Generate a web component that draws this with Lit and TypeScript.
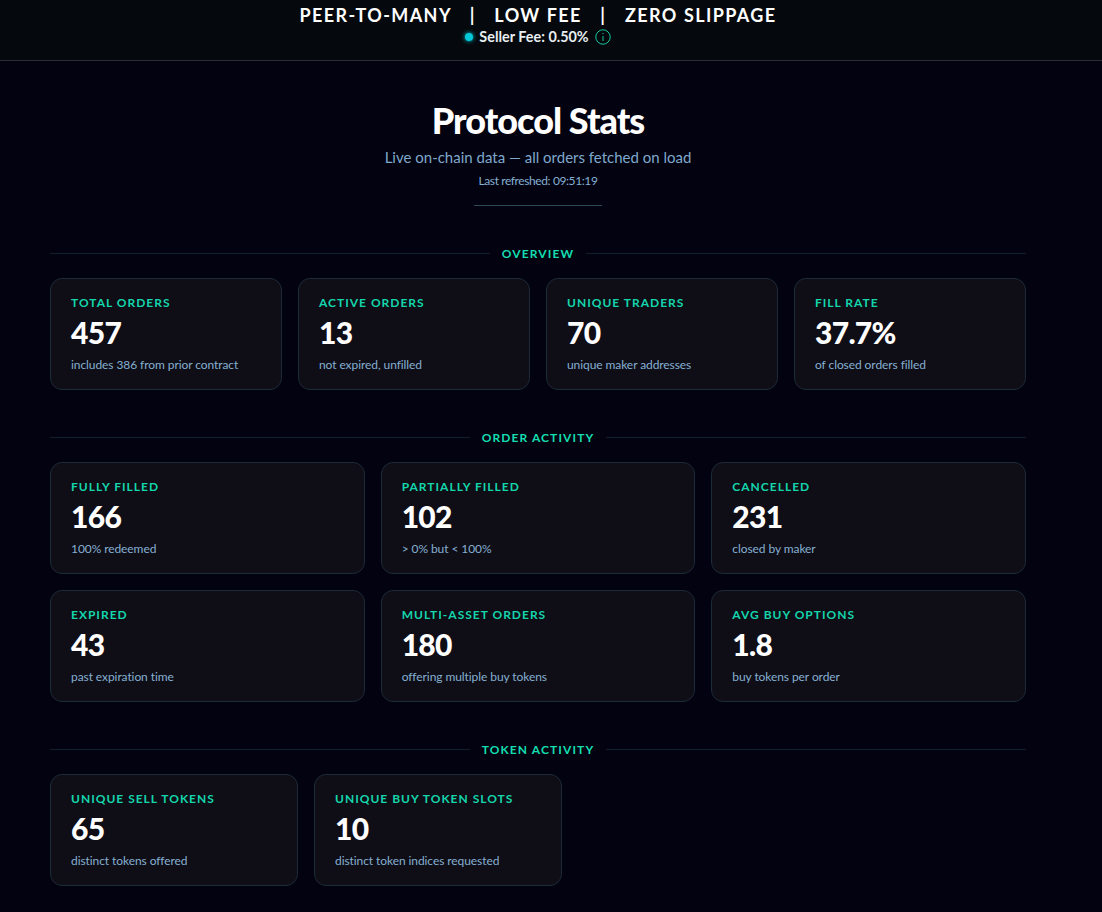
import { LitElement, html, css } from "lit";
import { customElement } from "lit/decorators.js";

type Stat = [string, string, string];
const overview: Stat[] = [
  ["Total Orders", "457", "includes 386 from prior contract"],
  ["Active Orders", "13", "not expired, unfilled"],
  ["Unique Traders", "70", "unique maker addresses"],
  ["Fill Rate", "37.7%", "of closed orders filled"],
];
const activity: Stat[] = [
  ["Fully Filled", "166", "100% redeemed"],
  ["Partially Filled", "102", "> 0% but < 100%"],
  ["Cancelled", "231", "closed by maker"],
  ["Expired", "43", "past expiration time"],
  ["Multi-Asset Orders", "180", "offering multiple buy tokens"],
  ["Avg Buy Options", "1.8", "buy tokens per order"],
];
const tokens: Stat[] = [
  ["Unique Sell Tokens", "65", "distinct tokens offered"],
  ["Unique Buy Token Slots", "10", "distinct token indices requested"],
];

@customElement("app-root")
export class AppRoot extends LitElement {
  static styles = css`
    :host { display: block; min-height: 912px; background: #020210; color: #fff; font-family: Lato, "Noto Sans", sans-serif; overflow: hidden; }
    .top { height: 61px; box-sizing: border-box; border-bottom: 1px solid #2a2d35; background: #05090d; display: flex; flex-direction: column; align-items: center; padding: 5px 26px 0 0; }
    .tag { font-size: 18px; line-height: 20px; font-weight: 700; letter-spacing: 1.4px; word-spacing: 0.4px; white-space: pre; }
    .fee { display: flex; align-items: center; gap: 6px; font-size: 14.4px; font-weight: 700; line-height: 20px; margin-top: 2px; color: #e8eef2; }
    .dot { width: 8px; height: 8px; border-radius: 50%; background: #00c8d8; box-shadow: 0 0 4px #00c8d8; }
    .main { width: 976px; margin-left: 50px; }
    .head { display: flex; flex-direction: column; align-items: center; padding-top: 37px; }
    h1 { margin: 0; font-size: 36px; line-height: 44px; font-weight: 900; letter-spacing: -0.95px; }
    .sub { font-size: 15px; line-height: 20px; color: #7fa9cc; margin-top: 5px; }
    .ref { font-size: 12px; line-height: 16px; color: #85b0d2; margin-top: 6px; letter-spacing: -0.4px; }
    .rule { width: 128px; height: 1px; background: #2c4a55; margin-top: 16px; }
    .section { display: flex; align-items: center; gap: 12px; height: 16px; font-size: 12px; font-weight: 700; letter-spacing: 1.1px; color: #14deb0; text-transform: uppercase; white-space: nowrap; }
    .section::before, .section::after { content: ""; flex: 1; height: 1px; background: #12202c; }
    .s1 { margin-top: 39px; }
    .s2, .s3 { margin-top: 39px; }
    .grid { display: grid; gap: 16px; margin-top: 17px; }
    .g4 { grid-template-columns: repeat(4, 1fr); }
    .g3 { grid-template-columns: repeat(3, 1fr); }
    .g2 { grid-template-columns: 248px 248px; }
    .card { height: 112px; box-sizing: border-box; padding: 16px 20px; border: 1px solid #1c2b38; border-radius: 12px; background: #0f0d16; }
    .label { font-size: 12px; line-height: 16px; font-weight: 700; letter-spacing: 1px; color: #14d6ac; text-transform: uppercase; white-space: nowrap; }
    .value { font-size: 30px; line-height: 36px; font-weight: 900; margin-top: 3px; letter-spacing: -0.7px; }
    .note { font-size: 12px; line-height: 16px; color: #85b0d2; margin-top: 7px; white-space: nowrap; letter-spacing: -0.08px; }
  `;

  card(s: Stat) {
    return html`<div class="card"><div class="label">${s[0]}</div><div class="value">${s[1]}</div><div class="note">${s[2]}</div></div>`;
  }

  render() {
    return html`
      <div class="top">
        <div class="tag">PEER-TO-MANY   |   LOW FEE   |   ZERO SLIPPAGE</div>
        <div class="fee"><span class="dot"></span><span>Seller Fee: 0.50%</span>
          <svg width="16" height="16" viewBox="0 0 16 16" fill="none" stroke="#14deb0" stroke-width="0.9"><circle cx="8" cy="8" r="7.2"/><path d="M8 7v5M8 4v1.2"/></svg>
        </div>
      </div>
      <div class="main">
        <div class="head">
          <h1>Protocol Stats</h1>
          <div class="sub">Live on-chain data — all orders fetched on load</div>
          <div class="ref">Last refreshed: 09:51:19</div>
          <div class="rule"></div>
        </div>
        <div class="section s1">Overview</div>
        <div class="grid g4">${overview.map((s) => this.card(s))}</div>
        <div class="section s2">Order Activity</div>
        <div class="grid g3">${activity.map((s) => this.card(s))}</div>
        <div class="section s3">Token Activity</div>
        <div class="grid g2">${tokens.map((s) => this.card(s))}</div>
      </div>
    `;
  }
}
